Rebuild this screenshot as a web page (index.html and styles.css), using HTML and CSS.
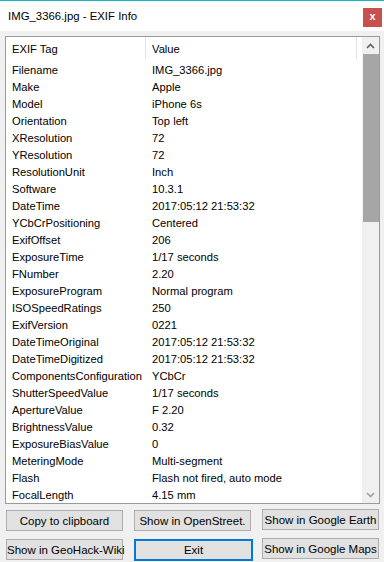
FILE: index.html
```html
<!DOCTYPE html>
<html lang="en">
<head>
<meta charset="utf-8"/>
<title>IMG_3366.jpg - EXIF Info</title>
<link rel="stylesheet" href="styles.css">
</head>
<body>
<div class="window">
<div class="titlebar">
<span class="title">IMG_3366.jpg - EXIF Info</span>
<div class="close-btn">x</div>
</div>
<div class="content">
<div class="listbox">
<div class="list">
<div class="row header">
<div class="cell tag">EXIF Tag</div>
<div class="cell value">Value</div>
</div>
<div class="row"><div class="cell tag">Filename</div><div class="cell value">IMG_3366.jpg</div></div>
<div class="row"><div class="cell tag">Make</div><div class="cell value">Apple</div></div>
<div class="row"><div class="cell tag">Model</div><div class="cell value">iPhone 6s</div></div>
<div class="row"><div class="cell tag">Orientation</div><div class="cell value">Top left</div></div>
<div class="row"><div class="cell tag">XResolution</div><div class="cell value">72</div></div>
<div class="row"><div class="cell tag">YResolution</div><div class="cell value">72</div></div>
<div class="row"><div class="cell tag">ResolutionUnit</div><div class="cell value">Inch</div></div>
<div class="row"><div class="cell tag">Software</div><div class="cell value">10.3.1</div></div>
<div class="row"><div class="cell tag">DateTime</div><div class="cell value">2017:05:12 21:53:32</div></div>
<div class="row"><div class="cell tag">YCbCrPositioning</div><div class="cell value">Centered</div></div>
<div class="row"><div class="cell tag">ExifOffset</div><div class="cell value">206</div></div>
<div class="row"><div class="cell tag">ExposureTime</div><div class="cell value">1/17 seconds</div></div>
<div class="row"><div class="cell tag">FNumber</div><div class="cell value">2.20</div></div>
<div class="row"><div class="cell tag">ExposureProgram</div><div class="cell value">Normal program</div></div>
<div class="row"><div class="cell tag">ISOSpeedRatings</div><div class="cell value">250</div></div>
<div class="row"><div class="cell tag">ExifVersion</div><div class="cell value">0221</div></div>
<div class="row"><div class="cell tag">DateTimeOriginal</div><div class="cell value">2017:05:12 21:53:32</div></div>
<div class="row"><div class="cell tag">DateTimeDigitized</div><div class="cell value">2017:05:12 21:53:32</div></div>
<div class="row"><div class="cell tag">ComponentsConfiguration</div><div class="cell value">YCbCr</div></div>
<div class="row"><div class="cell tag">ShutterSpeedValue</div><div class="cell value">1/17 seconds</div></div>
<div class="row"><div class="cell tag">ApertureValue</div><div class="cell value">F 2.20</div></div>
<div class="row"><div class="cell tag">BrightnessValue</div><div class="cell value">0.32</div></div>
<div class="row"><div class="cell tag">ExposureBiasValue</div><div class="cell value">0</div></div>
<div class="row"><div class="cell tag">MeteringMode</div><div class="cell value">Multi-segment</div></div>
<div class="row"><div class="cell tag">Flash</div><div class="cell value">Flash not fired, auto mode</div></div>
<div class="row"><div class="cell tag">FocalLength</div><div class="cell value">4.15 mm</div></div>
</div>
<div class="scrollbar">
<div class="arrow">
<svg width="9" height="6" viewBox="0 0 9 6"><polyline points="1,5 4.5,1.5 8,5" fill="none" stroke="#606060" stroke-width="1.6"/></svg>
</div>
<div class="track">
<div class="thumb"></div>
</div>
<div class="arrow">
<svg width="9" height="6" viewBox="0 0 9 6"><polyline points="1,1 4.5,4.5 8,1" fill="none" stroke="#a0a0a0" stroke-width="1.6"/></svg>
</div>
</div>
</div>
<div class="buttons">
<button class="btn">Copy to clipboard</button>
<button class="btn">Show in OpenStreet.</button>
<button class="btn up">Show in Google Earth</button>
<button class="btn">Show in GeoHack-Wiki</button>
<button class="btn btn-default">Exit</button>
<button class="btn up">Show in Google Maps</button>
</div>
</div>
</div>
</body>
</html>
```

FILE: styles.css
```css
* {
    margin: 0;
    padding: 0;
    box-sizing: border-box;
}

body {
    font-family: 'Liberation Sans', Arial, sans-serif;
    font-size: 11.2px;
    color: #000;
    background: #f0f0f0;
}

.window {
    width: 384px;
    height: 562px;
    border-top: 1px solid #1bb1c6;
    background: #f0f0f0;
    overflow: hidden;
}

.titlebar {
    height: 30px;
    background: #fff;
    display: flex;
    justify-content: space-between;
    align-items: flex-start;
    padding: 0 2px 0 8px;
}

.title {
    font-size: 11.4px;
    line-height: 30px;
}

.close-btn {
    width: 19px;
    height: 19px;
    margin-top: 7px;
    background: #c75050;
    color: #fff;
    font-weight: bold;
    font-size: 11px;
    line-height: 17px;
    text-align: center;
}

.content {
    padding: 5px 4px 0 5px;
}

.listbox {
    width: 375px;
    height: 468px;
    border: 1px solid #9a9a9a;
    background: #fff;
    display: flex;
    overflow: hidden;
}

.list {
    flex: 1;
    overflow: hidden;
}

.row {
    display: flex;
    height: 17px;
    line-height: 17px;
    white-space: nowrap;
}

.cell {
    padding-left: 6px;
    overflow: hidden;
}

.tag {
    width: 140px;
}

.value {
    width: 211px;
}

.header {
    height: 25px;
    line-height: 24px;
}

.header .cell {
    border-right: 1px solid #e5e5e5;
    height: 22px;
}

.scrollbar {
    width: 17px;
    background: #f0f0f0;
    display: flex;
    flex-direction: column;
}

.arrow {
    height: 17px;
    display: flex;
    align-items: center;
    justify-content: center;
}

.track {
    flex: 1;
    padding-left: 1px;
}

.thumb {
    height: 168px;
    background: #a6a6a6;
}

.buttons {
    display: grid;
    grid-template-columns: 117px 117px 117px;
    justify-content: space-between;
    row-gap: 8px;
    width: 374px;
    margin-top: 6px;
    padding-left: 1px;
}

.btn {
    height: 21px;
    font-family: inherit;
    font-size: 11.5px;
    background: #e1e1e1;
    border: 1px solid #adadad;
    color: #000;
    white-space: nowrap;
}

.btn.up {
    margin-top: -1px;
}

.btn-default {
    border: 2px solid #0078d7;
    width: 119px;
    height: 22px;
}
```
